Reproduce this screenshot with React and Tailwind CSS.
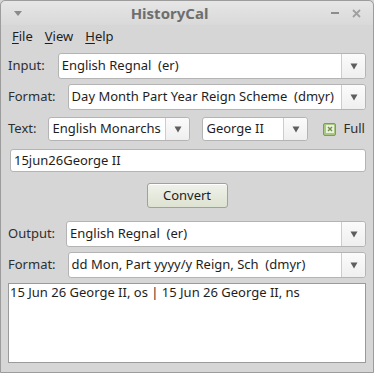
import React from "react";

const font = { fontFamily: '"Noto Sans", "DejaVu Sans", sans-serif' };

const Arrow = () => (
  <svg width="8" height="7" viewBox="0 0 8 7">
    <path d="M0.5 0.5 L7.5 0.5 L4 6.5 Z" fill="#5e5e5e" />
  </svg>
);

const Combo = ({ value, className = "", h = "h-[26px]" }) => (
  <div
    className={
      "flex min-w-0 items-stretch rounded-[3px] border border-[#b4b4b4] bg-white " +
      h +
      " " +
      className
    }
  >
    <div className="flex min-w-0 flex-1 items-center overflow-hidden whitespace-pre pl-[3px] text-[13px] text-[#1e1e1e]">
      {value}
    </div>
    <div className="flex w-[24px] items-center justify-center rounded-r-[3px] border-l border-[#cdcdcd] bg-gradient-to-b from-[#fbfbfb] to-[#efefef]">
      <Arrow />
    </div>
  </div>
);

const Row = ({ label, children, className = "" }) => (
  <div className={"flex items-center " + className}>
    <span className="text-[13px] text-[#2e2e2e]">{label}</span>
    {children}
  </div>
);

export default function App() {
  return (
    <div style={font} className="h-[373px] w-[374px] bg-[#d5d5d5]">
      <div className="flex h-[373px] flex-col rounded-t-[5px] border border-[#9c9c9c] bg-[#d6d6d6]">
        {/* title bar */}
        <div className="flex h-[24px] items-center rounded-t-[5px] bg-gradient-to-b from-[#e6e6e6] to-[#d9d9d9] pl-[13px] pr-[12px]">
          <svg width="8" height="5" viewBox="0 0 8 5">
            <path d="M0 0 L8 0 L4 5 Z" fill="#8a8a8a" />
          </svg>
          <div className="flex-1 pr-[14px] text-center text-[15px] font-bold text-[#6e6e6e]">HistoryCal</div>
          <div className="flex items-center gap-[13px]">
            <div className="h-[2px] w-[8px] bg-[#8c8c8c]" />
            <svg width="9" height="9" viewBox="0 0 9 9">
              <path d="M1 1 L8 8 M8 1 L1 8" stroke="#a0a0a0" strokeWidth="1.8" />
            </svg>
          </div>
        </div>

        {/* menu */}
        <div className="flex h-[22px] items-center gap-[12px] px-[11px] pt-[1px] text-[13px] text-[#1e1e1e]">
          <span><span className="underline underline-offset-2">F</span>ile</span>
          <span><span className="underline underline-offset-2">V</span>iew</span>
          <span><span className="underline underline-offset-2">H</span>elp</span>
        </div>

        <div className="flex flex-1 flex-col px-[7px] pt-[6px]">
          <Row label="Input:">
            <Combo value="English Regnal  (er)" className="ml-[13px] flex-1" />
          </Row>
          <Row label="Format:" className="mt-[5px]">
            <Combo value="Day Month Part Year Reign Scheme  (dmyr)" className="ml-[12px] flex-1" />
          </Row>
          <Row label="Text:" className="mt-[7px]">
            <Combo value="English Monarchs" h="h-[24px]" className="ml-[12px] w-[142px]" />
            <Combo value="George II" h="h-[24px]" className="ml-[12px] w-[106px]" />
            <div className="ml-[15px] flex h-[13px] w-[13px] items-center justify-center rounded-[2px] border border-[#7f9a5c] bg-[#aac683]">
              <div className="flex h-[8px] w-[8px] items-center justify-center bg-[#e9f2dc]">
                <svg width="6" height="6" viewBox="0 0 6 6">
                  <path d="M1 1 L5 5 M5 1 L1 5" stroke="#6f8f48" strokeWidth="1.4" />
                </svg>
              </div>
            </div>
            <span className="ml-[7px] text-[13px] text-[#2e2e2e]">Full</span>
          </Row>

          <div className="mt-[8px] ml-[2px] flex h-[23px] items-center rounded-[3px] border border-[#b4b4b4] bg-white pl-[3px] text-[13px] text-[#1e1e1e]">
            15jun26George II
          </div>

          <div className="mt-[11px] flex justify-center">
            <div className="flex h-[25px] w-[81px] items-center justify-center rounded-[3px] border border-[#a0a0a0] bg-gradient-to-b from-[#f0f2ea] to-[#dde2d2] text-[13px] text-[#1e1e1e] shadow-[inset_0_1px_0_#fff]">
              Convert
            </div>
          </div>

          <Row label="Output:" className="mt-[13px]">
            <Combo value="English Regnal  (er)" className="ml-[11px] flex-1" />
          </Row>
          <Row label="Format:" className="mt-[5px]">
            <Combo value="dd Mon, Part yyyy/y Reign, Sch  (dmyr)" className="ml-[12px] flex-1" />
          </Row>

          <div className="mt-[5px] h-[80px] border border-[#9a9a9a] bg-white px-[1px] text-[13px] leading-[17px] text-[#1e1e1e]">
            15 Jun 26 George II, os | 15 Jun 26 George II, ns
          </div>
        </div>
      </div>
    </div>
  );
}
